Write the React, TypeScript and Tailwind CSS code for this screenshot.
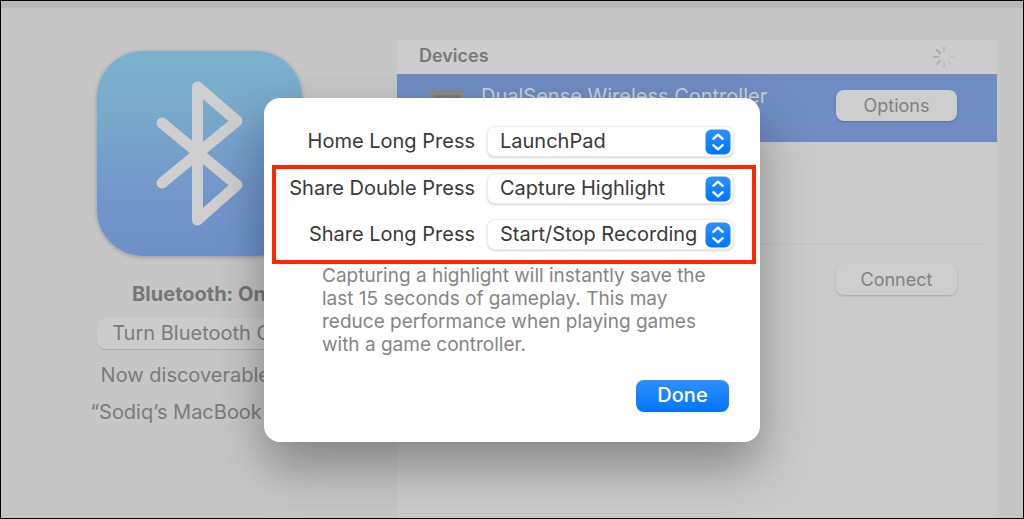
import { useState, type ReactNode } from "react";

const ACTIONS = ["LaunchPad", "Capture Highlight", "Start/Stop Recording"];

interface ShortcutRowProps {
  id: string;
  label: string;
  initial: string;
}

function ShortcutRow({ id, label, initial }: ShortcutRowProps) {
  const [value, setValue] = useState(initial);
  return (
    <div className="flex items-center justify-end gap-3">
      <label htmlFor={id} className="pb-0.5 text-[20px] leading-6 whitespace-nowrap">
        {label}
      </label>
      <div className="relative w-[247px]">
        <select
          id={id}
          value={value}
          onChange={(e) => setValue(e.target.value)}
          className="block h-[31px] w-full appearance-none rounded-lg border border-[#ededed] bg-white pl-3 pr-8 pb-0.5 text-[20px] leading-6 shadow-[0_1px_2px_rgba(0,0,0,0.18)]"
        >
          {ACTIONS.map((a) => (
            <option key={a} value={a}>
              {a}
            </option>
          ))}
        </select>
        <svg
          viewBox="0 0 26 26"
          className="pointer-events-none absolute top-[3px] right-[3px] size-[26px]"
          fill="none"
          stroke="white"
          strokeWidth="2.4"
          strokeLinecap="round"
          strokeLinejoin="round"
        >
          <defs>
            <linearGradient id={`${id}-fill`} x1="0" y1="0" x2="0" y2="1">
              <stop offset="0" stopColor="#2b90ff" />
              <stop offset="1" stopColor="#0075fb" />
            </linearGradient>
          </defs>
          <rect x="0.5" y="0.5" width="25" height="25" rx="6" fill={`url(#${id}-fill)`} stroke="none" />
          <path d="M8.3 9.8 13 5.7l4.7 4.1M8.3 16.2l4.7 4.1 4.7-4.1" />
        </svg>
      </div>
    </div>
  );
}

function BluetoothLogo() {
  return (
    <svg viewBox="0 0 205 205" className="size-[205px] rounded-[46px] shadow-[0_1px_4px_rgba(0,0,0,0.25)]">
      <defs>
        <linearGradient id="bt-bg" x1="0" y1="0" x2="0" y2="1">
          <stop offset="0" stopColor="#7bb1ce" />
          <stop offset="0.3" stopColor="#79a9cb" />
          <stop offset="0.75" stopColor="#7195cb" />
          <stop offset="1" stopColor="#6f91ca" />
        </linearGradient>
      </defs>
      <rect width="205" height="205" fill="url(#bt-bg)" />
      <path
        d="M65 72 140 134 100.500 169V36L140 70 65 132"
        fill="none"
        stroke="#cfcfcf"
        strokeWidth="11"
        strokeLinecap="round"
        strokeLinejoin="round"
      />
    </svg>
  );
}

function Spinner() {
  const shades = ["#bebebe", "#c8c8c8", "#c7c7c7", "#c4c4c4", "#bebebe", "#b4b4b4", "#aeaeae", "#a9a9a9"];
  return (
    <svg viewBox="0 0 26 26" className="size-[26px]" strokeWidth="2.2" strokeLinecap="round">
      {shades.map((c, i) => (
        <path key={i} d="M13 7.500V3" stroke={c} transform={`rotate(${i * 45} 13 13)`} />
      ))}
    </svg>
  );
}

function ControllerIcon() {
  return (
    <svg viewBox="0 0 36 36" className="size-9">
      <rect width="36" height="36" rx="5" fill="#8a8a8a" />
      <rect x="4" y="5" width="28" height="26" rx="3" fill="#7b7b7b" />
      <circle cx="28" cy="8" r="1.8" fill="#b3644f" />
    </svg>
  );
}

function ListButton({ children }: { children: ReactNode }) {
  return (
    <button
      type="button"
      className="h-[31px] w-[121px] rounded-lg bg-[#cecece] text-[18px] leading-6 text-[#818181] shadow-[0_1px_2px_rgba(0,0,0,0.18)]"
    >
      {children}
    </button>
  );
}

function BluetoothStatus() {
  return (
    <section className="flex w-[396px] shrink-0 flex-col items-center pt-[43px] text-[20px] leading-6 text-[#7b7b7b]">
      <BluetoothLogo />
      <h1 className="mt-[26px] font-bold text-[#767676]">Bluetooth: On</h1>
      <button
        type="button"
        className="mt-3 h-[31px] w-[205px] rounded-lg bg-[#cccccc] pb-0.5 whitespace-nowrap shadow-[0_1px_1px_rgba(0,0,0,0.15)]"
      >
        Turn Bluetooth Off
      </button>
      <p className="mt-[14px]">Now discoverable as</p>
      <p className="mt-[13px]">“Sodiq’s MacBook Pro”</p>
    </section>
  );
}

function DeviceList() {
  return (
    <section className="mt-8 mr-[26px] flex min-w-0 flex-1 flex-col bg-[#cbcbcb]">
      <header className="flex h-[34px] items-center justify-between bg-[#cdcdcd] pr-10 pl-[22px]">
        <h2 className="pb-0.5 text-[18px] leading-6 font-semibold text-[#797979]">Devices</h2>
        <Spinner />
      </header>
      <ul>
        <li className="flex h-[68px] items-start bg-[#6f8dc3] pr-10 pl-8">
          <div className="mt-4">
            <ControllerIcon />
          </div>
          <span className="mt-[10px] ml-4 flex-1 text-[20px] leading-6 whitespace-nowrap text-[#c9cfda]">
            DualSense Wireless Controller
          </span>
          <div className="mt-4">
            <ListButton>Options</ListButton>
          </div>
        </li>
        <li className="mr-[10px] ml-[22px] h-[102px] border-b border-[#c3c3c3]" />
        <li className="flex justify-end pt-5 pr-10">
          <ListButton>Connect</ListButton>
        </li>
      </ul>
    </section>
  );
}

function ShortcutsDialog() {
  return (
    <div
      role="dialog"
      aria-modal="true"
      className="w-[496px] rounded-[16px] bg-white px-2 pt-7 pb-[30px] text-[#3a3a3a] shadow-[0_24px_50px_rgba(0,0,0,0.34)]"
    >
      <div className="pr-[18px]">
        <ShortcutRow id="home-long" label="Home Long Press" initial="LaunchPad" />
      </div>
      <div className="mt-2 -mr-1 flex flex-col gap-[15px] border-4 border-[#ff2600] pt-1 pr-[18px] pb-[10px]">
        <ShortcutRow id="share-double" label="Share Double Press" initial="Capture Highlight" />
        <ShortcutRow id="share-long" label="Share Long Press" initial="Start/Stop Recording" />
      </div>
      <p className="ml-[50px] w-[390px] text-[19px] leading-[23px] text-[#858585]">
        Capturing a highlight will instantly save the last 15 seconds of gameplay. This may reduce
        performance when playing games with a game controller.
      </p>
      <div className="mt-6 flex justify-end pr-[23px]">
        <button
          type="button"
          className="h-8 w-[93px] rounded-lg bg-linear-to-b from-[#2b90ff] to-[#0075fb] pb-0.5 text-[20px] leading-6 font-medium text-white"
        >
          Done
        </button>
      </div>
    </div>
  );
}

export default function App() {
  return (
    <div className="relative flex min-h-screen flex-col overflow-hidden border border-black bg-[#c6c6c6] font-['Inter',sans-serif]">
      <div className="h-[7px] bg-[#b9b8b9]" />
      <main className="flex flex-1">
        <BluetoothStatus />
        <DeviceList />
      </main>
      <div className="absolute inset-0 flex items-start justify-center pt-[97px]">
        <ShortcutsDialog />
      </div>
    </div>
  );
}
